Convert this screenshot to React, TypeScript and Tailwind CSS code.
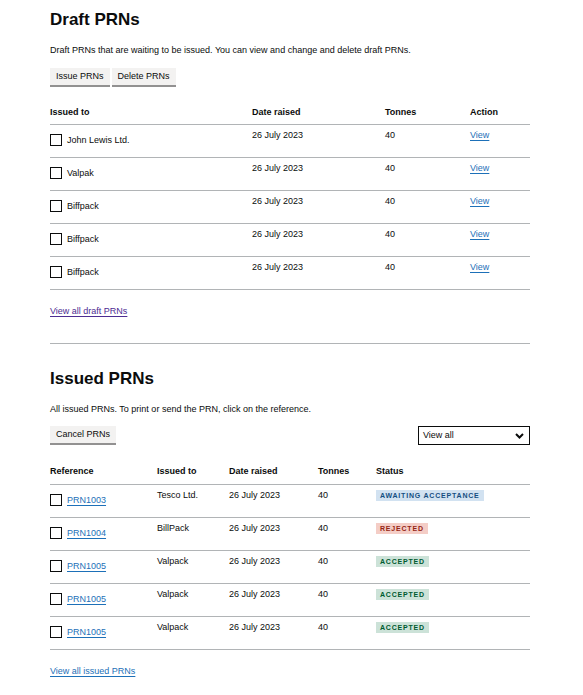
import React from 'react'

const draftRows = [
  { name: 'John Lewis Ltd.' },
  { name: 'Valpak' },
  { name: 'Biffpack' },
  { name: 'Biffpack' },
  { name: 'Biffpack' },
]

type Status = 'awaiting' | 'rejected' | 'accepted'

const issuedRows: { ref: string; to: string; status: Status }[] = [
  { ref: 'PRN1003', to: 'Tesco Ltd.', status: 'awaiting' },
  { ref: 'PRN1004', to: 'BillPack', status: 'rejected' },
  { ref: 'PRN1005', to: 'Valpack', status: 'accepted' },
  { ref: 'PRN1005', to: 'Valpack', status: 'accepted' },
  { ref: 'PRN1005', to: 'Valpack', status: 'accepted' },
]

function Checkbox() {
  return <span className="block w-[12px] h-[12px] shrink-0 border-[1.5px] border-[#0b0c0c] bg-white" />
}

function Button({ children }: { children: React.ReactNode }) {
  return (
    <button className="h-[17px] px-[6px] bg-[#f3f2f1] text-[#0b0c0c] text-[9px] leading-[11px] shadow-[0_2px_0_#929191]">
      {children}
    </button>
  )
}

function Tag({ status }: { status: Status }) {
  if (status === 'awaiting')
    return <span className="inline-block px-[4px] py-[2px] bg-[#d2e2f1] text-[#144e81] text-[7px] leading-[7px] font-bold tracking-[0.8px]">AWAITING ACCEPTANCE</span>
  if (status === 'rejected')
    return <span className="inline-block px-[4px] py-[2px] bg-[#f4cdc6] text-[#942514] text-[7px] leading-[7px] font-bold tracking-[0.8px]">REJECTED</span>
  return <span className="inline-block px-[4px] py-[2px] bg-[#cce2d8] text-[#005a30] text-[7px] leading-[7px] font-bold tracking-[0.8px]">ACCEPTED</span>
}

const link = 'text-[#1d70b8] underline underline-offset-[1.5px] decoration-1'

export default function App() {
  return (
    <div className="min-h-screen bg-white text-[#0b0c0c] font-['Liberation_Sans',Arial,sans-serif] text-[9px] leading-[11px]">
      <div className="w-[480px] ml-[50px] pt-[9px] pb-[20px]">
        <h1 className="text-[17px] leading-[21px] font-bold">Draft PRNs</h1>
        <p className="mt-[15px]">Draft PRNs that are waiting to be issued. You can view and change and delete draft PRNs.</p>
        <div className="flex gap-[2px] mt-[12px]">
          <Button>Issue PRNs</Button>
          <Button>Delete PRNs</Button>
        </div>

        <table className="w-full table-fixed border-collapse mt-[22px]">
          <colgroup>
            <col className="w-[202px]" />
            <col className="w-[133px]" />
            <col className="w-[85px]" />
            <col className="w-[60px]" />
          </colgroup>
          <thead>
            <tr className="border-b border-[#b1b4b6] text-left font-bold">
              <th className="pb-[6px] font-bold">Issued to</th>
              <th className="pb-[6px] font-bold">Date raised</th>
              <th className="pb-[6px] font-bold">Tonnes</th>
              <th className="pb-[6px] font-bold">Action</th>
            </tr>
          </thead>
          <tbody>
            {draftRows.map((r, i) => (
              <tr key={i} className="border-b border-[#b1b4b6] align-top">
                <td className="pt-[9px] pb-[11px]">
                  <div className="flex items-center gap-[5px]">
                    <Checkbox />
                    <span>{r.name}</span>
                  </div>
                </td>
                <td className="pt-[5px]">26 July 2023</td>
                <td className="pt-[5px]">40</td>
                <td className="pt-[5px]">
                  <a className={link} href="#">View</a>
                </td>
              </tr>
            ))}
          </tbody>
        </table>

        <div className="mt-[16px]">
          <a className="text-[#4c2c92] underline underline-offset-[1.5px] decoration-1" href="#">View all draft PRNs</a>
        </div>

        <hr className="mt-[26px] border-t border-[#b1b4b6]" />

        <h1 className="mt-[24px] text-[17px] leading-[21px] font-bold">Issued PRNs</h1>
        <p className="mt-[15px]">All issued PRNs. To print or send the PRN, click on the reference.</p>
        <div className="flex items-start justify-between mt-[11px]">
          <Button>Cancel PRNs</Button>
          <div className="w-[112px] h-[19px] border-[1.5px] border-[#0b0c0c] flex items-center justify-between pl-[4px] pr-[5px]">
            <span>View all</span>
            <svg width="9" height="6" viewBox="0 0 9 6">
              <polyline points="1,1 4.5,4.5 8,1" fill="none" stroke="#0b0c0c" strokeWidth="2" />
            </svg>
          </div>
        </div>

        <table className="w-full table-fixed border-collapse mt-[21px]">
          <colgroup>
            <col className="w-[107px]" />
            <col className="w-[72px]" />
            <col className="w-[89px]" />
            <col className="w-[58px]" />
            <col className="w-[154px]" />
          </colgroup>
          <thead>
            <tr className="border-b border-[#b1b4b6] text-left">
              <th className="pb-[7px] font-bold">Reference</th>
              <th className="pb-[7px] font-bold">Issued to</th>
              <th className="pb-[7px] font-bold">Date raised</th>
              <th className="pb-[7px] font-bold">Tonnes</th>
              <th className="pb-[7px] font-bold">Status</th>
            </tr>
          </thead>
          <tbody>
            {issuedRows.map((r, i) => (
              <tr key={i} className="border-b border-[#b1b4b6] align-top">
                <td className="pt-[9px] pb-[11px]">
                  <div className="flex items-center gap-[5px]">
                    <Checkbox />
                    <a className={link} href="#">{r.ref}</a>
                  </div>
                </td>
                <td className="pt-[5px]">{r.to}</td>
                <td className="pt-[5px]">26 July 2023</td>
                <td className="pt-[5px]">40</td>
                <td className="pt-[5px]">
                  <Tag status={r.status} />
                </td>
              </tr>
            ))}
          </tbody>
        </table>

        <div className="mt-[16px]">
          <a className={link} href="#">View all issued PRNs</a>
        </div>
      </div>
    </div>
  )
}
